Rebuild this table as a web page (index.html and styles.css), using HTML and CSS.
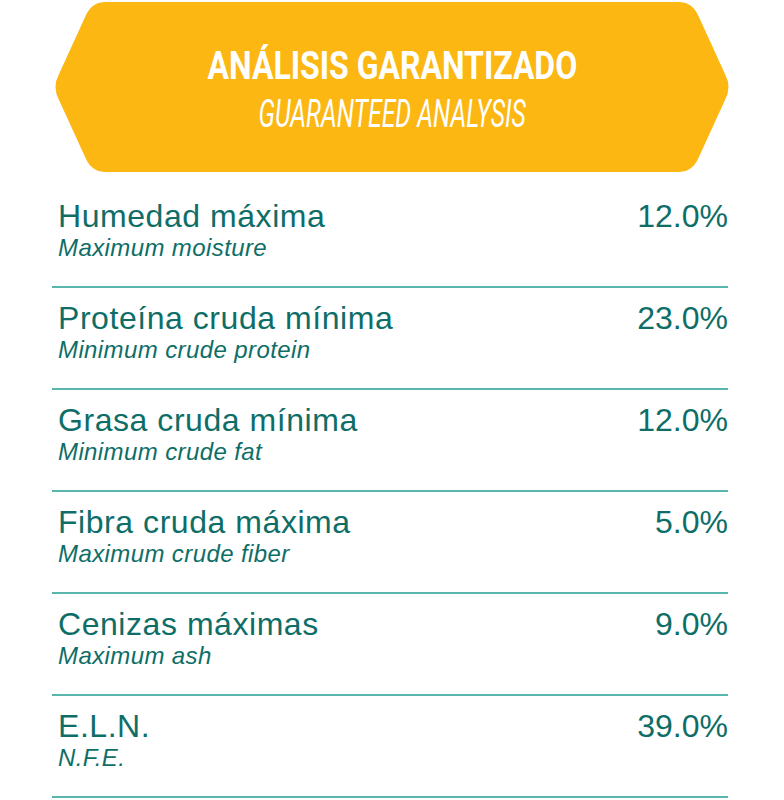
FILE: index.html
```html
<!DOCTYPE html>
<html lang="es">
<head>
<meta charset="utf-8">
<title>Análisis garantizado</title>
<link rel="stylesheet" href="styles.css">
</head>
<body>
<div class="page">
  <header class="banner">
    <h1 class="banner-title"><span class="squeeze title-main">ANÁLISIS GARANTIZADO</span></h1>
    <p class="banner-sub"><span class="squeeze sub-main">GUARANTEED ANALYSIS</span></p>
  </header>
  <ul class="list">
    <li class="row"><div class="names"><span class="es">Humedad máxima</span><span class="en">Maximum moisture</span></div><span class="val">12.0%</span></li>
    <li class="row"><div class="names"><span class="es">Proteína cruda mínima</span><span class="en">Minimum crude protein</span></div><span class="val">23.0%</span></li>
    <li class="row"><div class="names"><span class="es">Grasa cruda mínima</span><span class="en">Minimum crude fat</span></div><span class="val">12.0%</span></li>
    <li class="row"><div class="names"><span class="es">Fibra cruda máxima</span><span class="en">Maximum crude fiber</span></div><span class="val">5.0%</span></li>
    <li class="row"><div class="names"><span class="es">Cenizas máximas</span><span class="en">Maximum ash</span></div><span class="val">9.0%</span></li>
    <li class="row"><div class="names"><span class="es">E.L.N.</span><span class="en">N.F.E.</span></div><span class="val">39.0%</span></li>
  </ul>
</div>
</body>
</html>
```

FILE: styles.css
```css
html, body {
  margin: 0;
  padding: 0;
  background: #ffffff;
}
.page {
  width: 784px;
  padding-top: 2px;
}
.banner {
  width: 680px;
  height: 170px;
  margin-left: 52px;
  background: #fcb712;
  clip-path: path('M 54,0 L 626,0 Q 640,0 646,13 L 673,72 Q 680,85 673,98 L 646,157 Q 640,170 626,170 L 54,170 Q 40,170 34,157 L 7,98 Q 0,85 7,72 L 34,13 Q 40,0 54,0 Z');
  display: flex;
  flex-direction: column;
  align-items: center;
  color: #ffffff;
  font-family: Roboto, "Liberation Sans", sans-serif;
}
.banner-title {
  margin: 44px 0 0 0;
  font-size: 39px;
  line-height: 40px;
  font-weight: 700;
  height: 40px;
  white-space: nowrap;
}
.banner-sub {
  margin: 8px 0 0 0;
  font-size: 38px;
  line-height: 40px;
  font-weight: 400;
  font-style: italic;
  height: 40px;
  white-space: nowrap;
}
.squeeze {
  display: inline-block;
  transform-origin: center;
}
.title-main { transform: scaleX(0.82); }
.sub-main { transform: scaleX(0.655); }

.list {
  list-style: none;
  margin: 14px 0 0 52px;
  padding: 0;
  width: 676px;
  font-family: "Liberation Sans", Arial, sans-serif;
  color: #0e6e67;
}
.row {
  display: flex;
  justify-content: space-between;
  align-items: flex-start;
  height: 57px;
  padding: 14px 0 29px 6px;
  border-bottom: 2px solid #58b6ad;
}
.names {
  display: flex;
  flex-direction: column;
}
.es {
  font-size: 32px;
  line-height: 32px;
  letter-spacing: 0.55px;
}
.en {
  margin-top: 3px;
  font-size: 24px;
  line-height: 25px;
  font-style: italic;
  letter-spacing: 0.4px;
}
.val {
  font-size: 32px;
  line-height: 32px;
}
```
